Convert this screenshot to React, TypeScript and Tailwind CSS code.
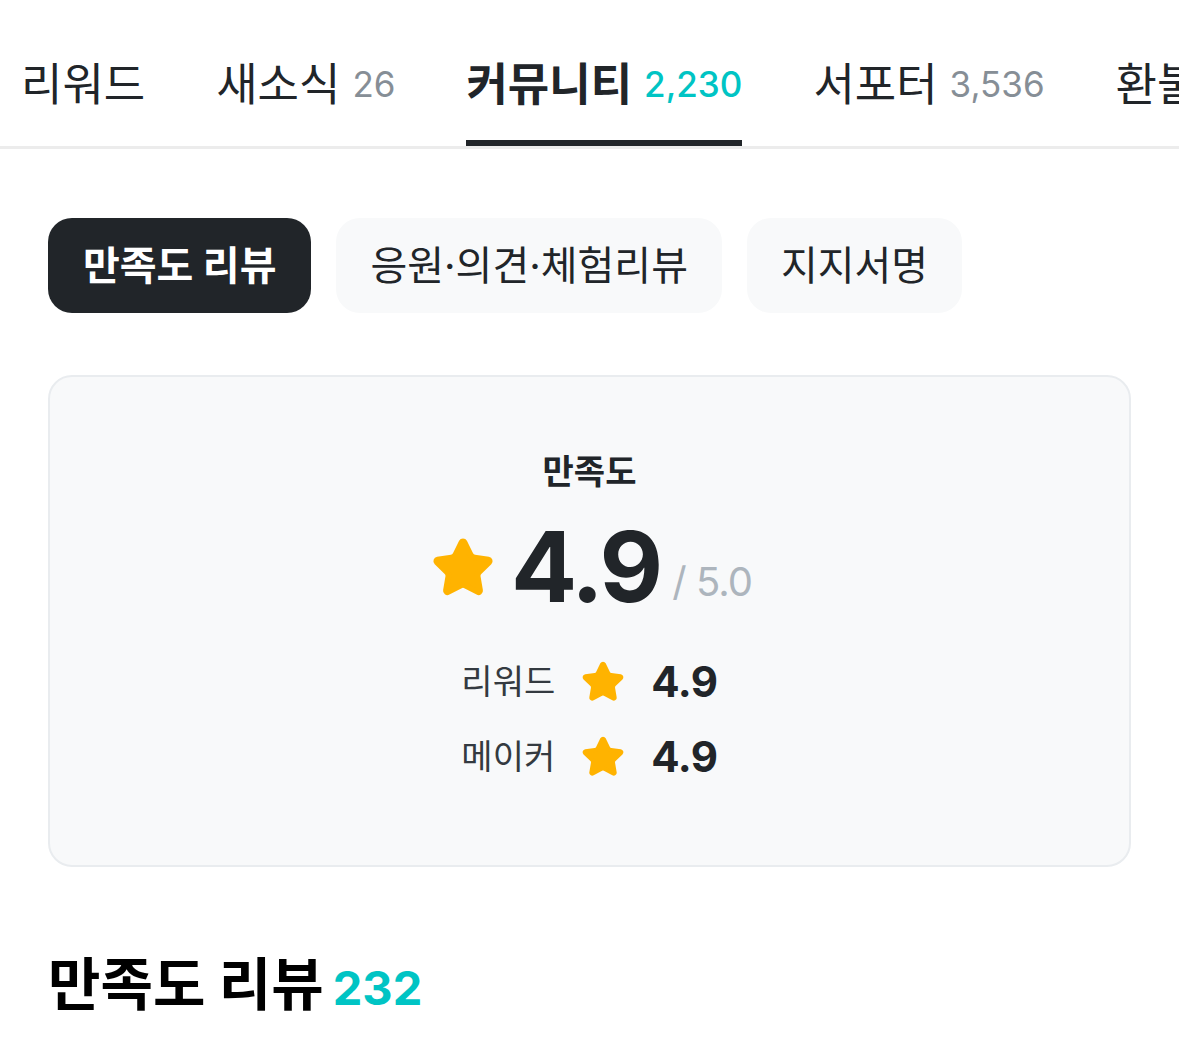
import { Star } from "lucide-react";

const font = "font-['Inter','Noto_Sans_CJK_KR',sans-serif]";

const tabs = [
  { label: "리워드", count: "" },
  { label: "새소식", count: "26" },
  { label: "커뮤니티", count: "2,230", active: true },
  { label: "서포터", count: "3,536" },
  { label: "환불·정책", count: "" },
];

const pills = [
  { label: "만족도 리뷰", active: true },
  { label: "응원·의견·체험리뷰" },
  { label: "지지서명" },
];

const YellowStar = ({ size }: { size: number }) => (
  <Star
    size={size}
    fill="#ffb300"
    color="#ffb300"
    strokeWidth={2.2}
    strokeLinejoin="round"
  />
);

const App = () => {
  return (
    <div className={`${font} w-[1179px] h-[1051px] overflow-hidden bg-white text-[#212529]`}>
      {/* Tab bar */}
      <nav className="flex gap-[71px] pl-[21px] border-b-[3px] border-[#ececec] whitespace-nowrap overflow-hidden">
        {tabs.map((tab) => (
          <div key={tab.label} className="relative h-[146px] pt-[62px] flex items-start shrink-0">
            <span
              className={
                tab.active
                  ? "text-[45px] leading-[45px] font-bold text-[#212529]"
                  : "text-[45px] leading-[45px] font-normal text-[#212529]"
              }
            >
              {tab.label}
            </span>
            {tab.count && (
              <span
                className={
                  tab.active
                    ? "ml-[12px] text-[35px] leading-[45px] font-medium text-[#00c4c4]"
                    : "ml-[12px] text-[35px] leading-[45px] font-normal text-[#868e96]"
                }
              >
                {tab.count}
              </span>
            )}
            {tab.active && (
              <span className="absolute left-0 right-0 bottom-0 h-[6px] bg-[#212529]" />
            )}
          </div>
        ))}
      </nav>

      <div className="px-12">
        {/* Sub filter pills */}
        <div className="flex gap-[25px] mt-[69px]">
          {pills.map((pill) => (
            <button
              key={pill.label}
              className={
                pill.active
                  ? "h-[95px] px-[35px] rounded-[24px] bg-[#212529] text-white text-[40px] font-bold whitespace-nowrap"
                  : "h-[95px] px-[34px] rounded-[24px] bg-[#f8f9fa] text-[#212529] text-[40px] font-normal whitespace-nowrap"
              }
            >
              {pill.label}
            </button>
          ))}
        </div>

        {/* Satisfaction card */}
        <div className="mt-[62px] h-[492px] rounded-[24px] border-2 border-[#e9ecef] bg-[#f8f9fa] flex flex-col items-center pt-[76px]">
          <div className="text-[34px] leading-[38px] font-bold text-[#212529]">만족도</div>

          <div className="mt-[26px] flex items-center gap-[16px] pl-[4px]">
            <YellowStar size={64} />
            <div className="flex items-baseline">
              <span className="text-[98px] leading-[100px] font-bold tracking-[-3px] text-[#212529]">4.9</span>
              <span className="ml-[12px] text-[40px] text-[#adb5bd] tracking-[-1px] relative top-[-6px]">/ 5.0</span>
            </div>
          </div>

          <div className="mt-[42px] flex flex-col gap-[31px]">
            {[
              { label: "리워드", score: "4.9" },
              { label: "메이커", score: "4.9" },
            ].map((row) => (
              <div key={row.label} className="flex items-center h-[44px]">
                <span className="w-[96px] shrink-0 whitespace-nowrap text-[34px] leading-[44px] text-[#343a40]">{row.label}</span>
                <span className="ml-[24px] flex items-center">
                  <YellowStar size={44} />
                </span>
                <span className="ml-[26px] text-[42px] leading-[44px] font-bold text-[#212529] tracking-[-0.5px]">{row.score}</span>
              </div>
            ))}
          </div>
        </div>

        {/* Section heading */}
        <div className="mt-[88px] flex items-baseline">
          <span className="text-[57px] leading-[60px] font-bold text-black">만족도 리뷰</span>
          <span className="ml-[9px] text-[47px] leading-[60px] font-bold text-[#00c4c4]">232</span>
        </div>
      </div>
    </div>
  );
};

export default App;
